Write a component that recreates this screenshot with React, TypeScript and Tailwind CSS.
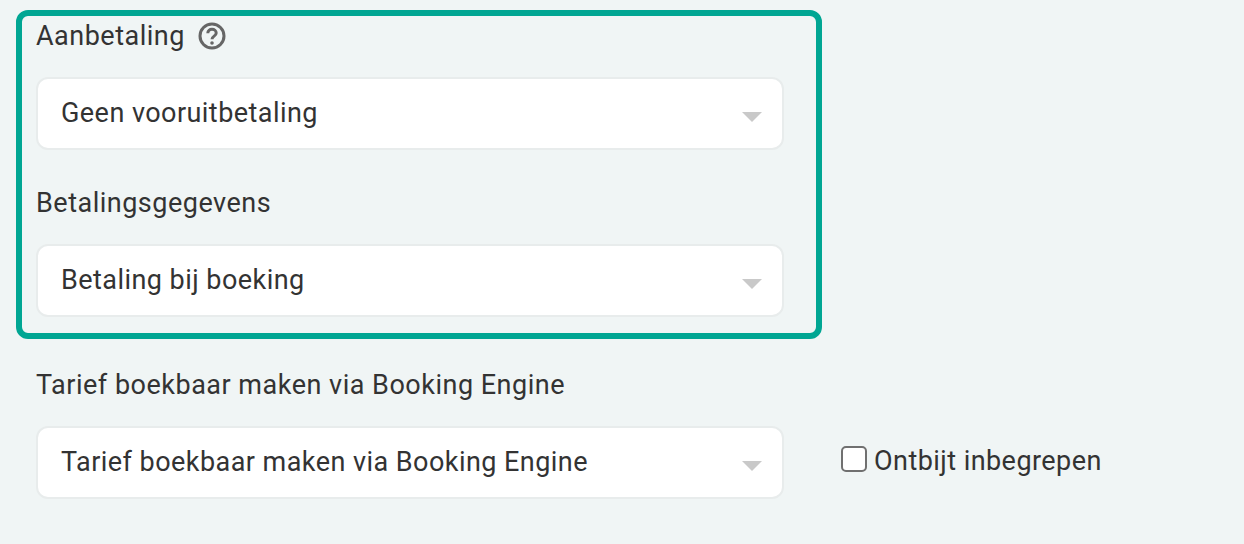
import React from 'react';

const Caret = () => (
  <svg width="20" height="10" viewBox="0 0 20 10" className="mt-[6px] shrink-0">
    <polygon points="0,0 20,0 10,10" fill="#c9c9c9" />
  </svg>
);

const SelectBox = ({ value }: { value: string }) => (
  <div className="flex h-[73px] w-[748px] items-center justify-between rounded-[12px] border-2 border-[#e8ecec] bg-white pl-[23px] pr-[20px]">
    <span className="text-[27px] tracking-[0.45px] text-[#333]">{value}</span>
    <Caret />
  </div>
);

const Label = ({ children }: { children: React.ReactNode }) => (
  <div className="flex h-10 items-center gap-[13px] text-[27px] tracking-[0.5px] text-[#333]">{children}</div>
);

export default function App() {
  return (
    <div className="h-[544px] overflow-hidden bg-[#f0f5f5] pt-[10px] pl-4 font-['Roboto',sans-serif]">
      <div className="w-[806px] rounded-[12px] border-[6px] border-[#00a693] pl-[14px] pb-4">
        <Label>
          Aanbetaling
          <svg width="28" height="28" viewBox="0 0 28 28" fill="none" className="shrink-0">
            <circle cx="14" cy="14" r="12" stroke="#666" strokeWidth="3" />
            <path d="M9.8 11.2c0-2.4 1.9-4 4.2-4s4.2 1.6 4.2 3.8c0 3.2-4.2 3-4.2 6.2" stroke="#666" strokeWidth="3" />
            <circle cx="14" cy="21" r="1.8" fill="#666" />
          </svg>
        </Label>
        <div className="mt-[21px]">
          <SelectBox value="Geen vooruitbetaling" />
        </div>
        <div className="mt-[33px]">
          <Label>Betalingsgegevens</Label>
        </div>
        <div className="mt-[21px]">
          <SelectBox value="Betaling bij boeking" />
        </div>
      </div>
      <div className="mt-[26px] pl-5">
        <Label>Tarief boekbaar maken via Booking Engine</Label>
        <div className="mt-[21px] flex items-start">
          <SelectBox value="Tarief boekbaar maken via Booking Engine" />
          <label className="ml-[57px] mt-[15px] flex items-center gap-[7px] text-[27px] tracking-[0.45px] text-[#333]">
            <span className="mb-1 h-[26px] w-[26px] rounded-[5px] border-2 border-[#707070] bg-white" />
            Ontbijt inbegrepen
          </label>
        </div>
      </div>
    </div>
  );
}
